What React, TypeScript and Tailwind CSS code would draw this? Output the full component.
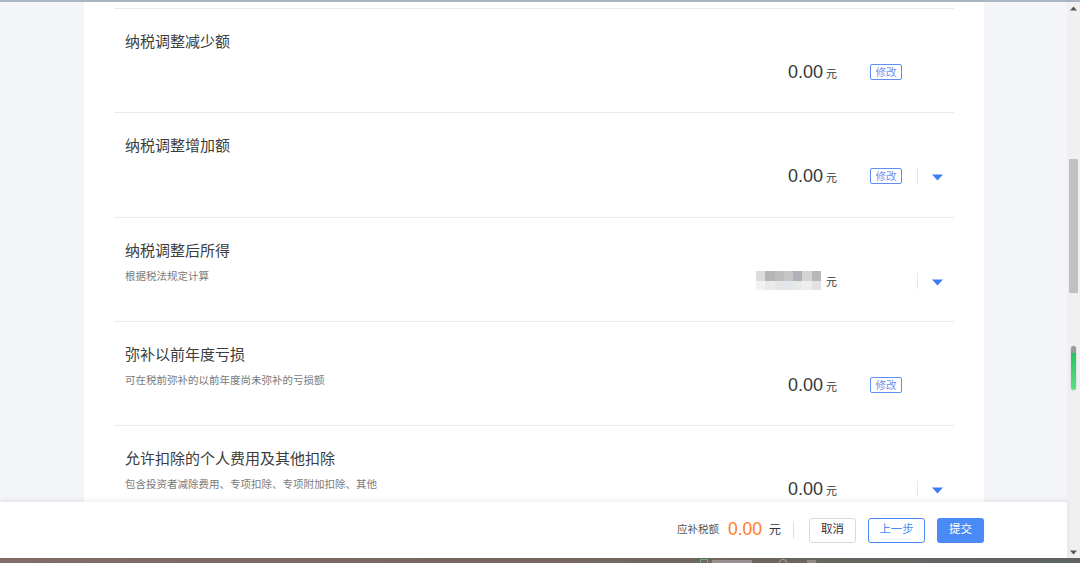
import React from "react";

type Row = {
  title: string;
  sub?: string;
  value?: string;
  blurred?: boolean;
  modify?: boolean;
  caret?: boolean;
};

const rows: Row[] = [
  { title: "纳税调整减少额", value: "0.00", modify: true },
  { title: "纳税调整增加额", value: "0.00", modify: true, caret: true },
  { title: "纳税调整后所得", sub: "根据税法规定计算", blurred: true, caret: true },
  { title: "弥补以前年度亏损", sub: "可在税前弥补的以前年度尚未弥补的亏损额", value: "0.00", modify: true },
  { title: "允许扣除的个人费用及其他扣除", sub: "包含投资者减除费用、专项扣除、专项附加扣除、其他", value: "0.00", caret: true },
];

const blurTop = ["#dcdcdc", "#b6b6b6", "#bdbdbd", "#c6c6c6", "#aeb2b6", "#d4d4d4", "#b8b8b8"];
const blurBot = ["#f2f2f2", "#eaeaea", "#e5e5e5", "#e2e6ec", "#e8e8e8", "#eeeeee", "#e2e2e2"];

function Blurred() {
  return (
    <div className="flex flex-col w-[65px] h-[19px] blur-[0.6px] self-center">
      <div className="flex h-[10px]">
        {blurTop.map((c, i) => (
          <div key={i} className="flex-1" style={{ background: c }} />
        ))}
      </div>
      <div className="flex h-[9px]">
        {blurBot.map((c, i) => (
          <div key={i} className="flex-1" style={{ background: c }} />
        ))}
      </div>
    </div>
  );
}

function Caret() {
  return (
    <svg width="11" height="7" viewBox="0 0 11 7" className="mt-[3px]">
      <path d="M0 0.5 L11 0.5 L5.5 6.5 Z" fill="#3b7ef3" />
    </svg>
  );
}

function RowItem({ r }: { r: Row }) {
  return (
    <div className="h-[104.25px] shrink-0 border-t border-[#ebebeb] flex">
      <div className="flex-1 pl-[11px] pt-[21px]">
        <div className="text-[15px] leading-[24px] text-[#3c3c3c]">{r.title}</div>
        {r.sub && <div className="mt-[5px] text-[10.5px] leading-[16px] text-[#7a7a7a]">{r.sub}</div>}
      </div>
      <div className="pt-[51px] pr-[11px]">
        <div className="flex items-center h-[24px]">
          <div className="flex items-baseline">
            {r.blurred ? (
              <div className="flex items-center">
                <Blurred />
                <span className="ml-[5px] text-[11px] text-[#333] mt-[4px]">元</span>
              </div>
            ) : (
              <>
                <span className="text-[18px] leading-[24px] text-[#383838] [font-family:'Liberation_Sans',sans-serif]">{r.value}</span>
                <span className="ml-[3px] text-[11px] text-[#333]">元</span>
              </>
            )}
          </div>
          <div className="ml-[33px] w-[32px] h-[16px] flex items-center">
            {r.modify && (
              <div className="w-[32px] h-[16px] border border-[#5d8ff5] rounded-[2px] flex items-center justify-center text-[10.5px] leading-none text-[#6c8ff0]">
                修改
              </div>
            )}
          </div>
          <div className="ml-[15px] w-px h-[16px] flex">
            {r.caret && <div className="w-px h-[16px] bg-[#e6e6e6]" />}
          </div>
          <div className="ml-[14px] w-[11px] flex items-center">{r.caret && <Caret />}</div>
        </div>
      </div>
    </div>
  );
}

export default function App() {
  return (
    <div className="w-[1080px] h-[563px] flex flex-col overflow-hidden bg-white [font-family:'Liberation_Sans','Noto_Sans_CJK_SC',sans-serif]">
      <div className="h-[2px] shrink-0 bg-[#a9b5c0]" />
      <div className="flex flex-1 min-h-0">
        <div className="flex-1 min-w-0 flex flex-col">
          <div className="flex-1 min-h-0 overflow-hidden bg-[#f4f5f9] flex pl-[84px]">
            <div className="w-[900px] bg-white px-[30px] pt-[6px] flex flex-col">
              {rows.map((r, i) => (
                <RowItem key={i} r={r} />
              ))}
            </div>
          </div>
          <div className="relative z-10 h-[56px] shrink-0 bg-white shadow-[0_-2px_5px_rgba(0,0,0,0.07)] flex items-center justify-end pr-[83px]">
            <span className="text-[10.5px] text-[#555]">应补税额</span>
            <span className="ml-[9px] text-[17.5px] leading-none text-[#ff7b1c]">0.00</span>
            <span className="ml-[7px] text-[12px] text-[#333]">元</span>
            <div className="ml-[12px] w-px h-[18px] bg-[#dedede]" />
            <div className="ml-[15px] w-[47px] h-[25px] border border-[#d9d9d9] rounded-[3px] flex items-center justify-center text-[11.5px] text-[#333]">
              取消
            </div>
            <div className="ml-[12px] w-[57px] h-[25px] border border-[#4a8af4] rounded-[3px] flex items-center justify-center text-[11.5px] text-[#4a8af4]">
              上一步
            </div>
            <div className="ml-[12px] w-[47px] h-[25px] bg-[#4a8af4] rounded-[3px] flex items-center justify-center text-[11.5px] text-white">
              提交
            </div>
          </div>
        </div>
        <div className="w-[13px] shrink-0 bg-[#f0f0f0] flex flex-col items-center">
          <svg width="7" height="5" viewBox="0 0 7 5" className="mt-[4px]">
            <path d="M0 4.5 L3.5 0.5 L7 4.5 Z" fill="#555" />
          </svg>
          <div className="mt-[148px] w-[9px] h-[134px] bg-[#c1c1c1]" />
          <div className="mt-[53px] w-[5px] h-[44px] rounded-full overflow-hidden flex flex-col shadow-[0_0_2px_rgba(0,0,0,0.2)]">
            <div className="h-[7px] bg-[#9a9a9a]" />
            <div className="flex-1 bg-gradient-to-b from-[#1ec45f] to-[#5be07f]" />
          </div>
          <div className="flex-1" />
          <svg width="7" height="5" viewBox="0 0 7 5" className="mb-[3px]">
            <path d="M0 0.5 L7 0.5 L3.5 4.5 Z" fill="#555" />
          </svg>
        </div>
      </div>
      <div className="h-[5px] shrink-0 bg-gradient-to-r from-[#836d66] via-[#76675f] to-[#5d6461] flex items-start">
        <div className="ml-[700px] mt-[1px] w-[8px] h-[4px] border-t border-x border-[#6fae7a]" />
        <div className="ml-[4px] mt-[2px] w-[40px] h-[3px] bg-[#9c9190]" />
        <div className="ml-[27px] mt-[1px] w-[8px] h-[4px] rounded-t-full border-t border-x border-[#a59a96]" />
        <div className="ml-[20px] mt-[2px] w-[9px] h-[3px] bg-[#938885]" />
      </div>
    </div>
  );
}
